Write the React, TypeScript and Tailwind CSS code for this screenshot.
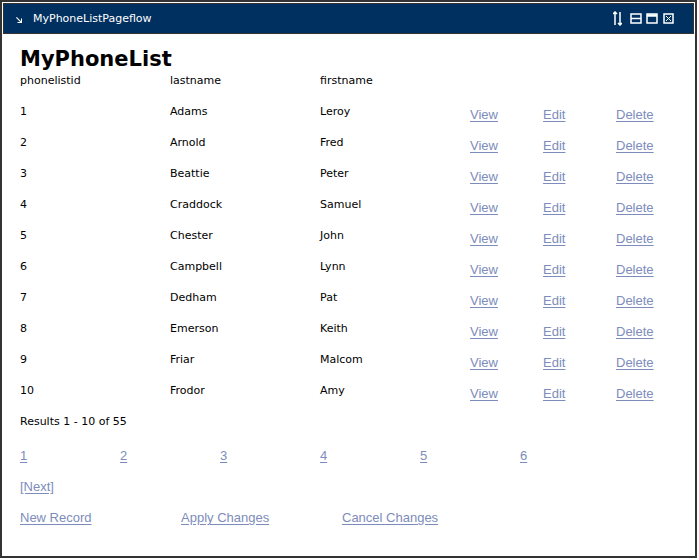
import React from "react"

const rows = [
  ["1", "Adams", "Leroy"],
  ["2", "Arnold", "Fred"],
  ["3", "Beattie", "Peter"],
  ["4", "Craddock", "Samuel"],
  ["5", "Chester", "John"],
  ["6", "Campbell", "Lynn"],
  ["7", "Dedham", "Pat"],
  ["8", "Emerson", "Keith"],
  ["9", "Friar", "Malcom"],
  ["10", "Frodor", "Amy"],
]

const linkCls = "text-[#7d8cbb] underline underline-offset-2 font-['Liberation_Sans',Arial,sans-serif] text-[13px]"

function TitleIcons() {
  return (
    <div className="flex items-center pr-[19px]">
      <svg width="9" height="15" viewBox="0 0 9 15" fill="none" stroke="white" strokeWidth="1.5">
        <path d="M2 14V1M0 3l2-2 2 2" />
        <path d="M7 1v13M5 12l2 2 2-2" />
      </svg>
      <svg width="12" height="11" viewBox="0 0 12 11" className="ml-[8px]" fill="none" stroke="white" strokeWidth="1.5">
        <rect x="1" y="1" width="10" height="9" />
        <path d="M1 5.5h10" />
      </svg>
      <svg width="12" height="11" viewBox="0 0 12 11" className="ml-[4px]" fill="none" stroke="white" strokeWidth="1.5">
        <rect x="1" y="1" width="10" height="9" />
        <path d="M1 2.5h10" strokeWidth="2.5" />
      </svg>
      <svg width="11" height="11" viewBox="0 0 11 11" className="ml-[5px]" fill="none" stroke="white" strokeWidth="1.5">
        <rect x="1" y="1" width="9" height="9" />
        <path d="M3 3l5 5M8 3l-5 5" strokeWidth="1" />
      </svg>
    </div>
  )
}

export default function App() {
  return (
    <div className="w-[699px] h-[560px] bg-white">
      <div className="w-[697px] h-[558px] border-2 border-[#333] flex flex-col font-['DejaVu_Sans',Verdana,sans-serif] text-[11px] text-black">
        <div className="p-px bg-white">
          <div className="h-[31px] border border-[#333] bg-[#00305f] flex items-center justify-between text-white">
            <div className="flex items-center pt-[2px]">
              <svg width="8" height="8" viewBox="0 0 8 8" className="ml-[11px] mr-[10px]" fill="white">
                <path d="M1 1.8L1.8 1 6 5.2V2.5h1V7H2.5V6h2.7z" />
              </svg>
              <span className="text-[11px]">MyPhoneListPageflow</span>
            </div>
            <TitleIcons />
          </div>
        </div>
        <div className="pl-[18px] pt-[9px]">
          <h1 className="text-[21px] font-bold leading-[30px]">MyPhoneList</h1>
          <div className="grid grid-cols-[150px_150px_150px_73px_73px_100px]">
            <div className="h-[29px] leading-[14px]">phonelistid</div>
            <div className="leading-[14px]">lastname</div>
            <div className="leading-[14px]">firstname</div>
            <div />
            <div />
            <div />
            {rows.map((r) => (
              <React.Fragment key={r[0]}>
                <div className="h-[31px] pt-[2px] leading-[14px]">{r[0]}</div>
                <div className="pt-[2px] leading-[14px]">{r[1]}</div>
                <div className="pt-[2px] leading-[14px]">{r[2]}</div>
                <div className="pt-[4px] leading-[16px]"><a className={linkCls}>View</a></div>
                <div className="pt-[4px] leading-[16px]"><a className={linkCls}>Edit</a></div>
                <div className="pt-[4px] leading-[16px]"><a className={linkCls}>Delete</a></div>
              </React.Fragment>
            ))}
          </div>
          <div className="pt-[2px] h-[35px] leading-[14px]">Results 1 - 10 of 55</div>
          <div className="flex h-[31px] leading-[16px]">
            {["1", "2", "3", "4", "5", "6"].map((p) => (
              <div key={p} className="w-[100px]"><a className={linkCls}>{p}</a></div>
            ))}
          </div>
          <div className="h-[31px] leading-[16px]"><a className={linkCls}>[Next]</a></div>
          <div className="flex leading-[16px]">
            <div className="w-[161px]"><a className={linkCls}>New Record</a></div>
            <div className="w-[161px]"><a className={linkCls}>Apply Changes</a></div>
            <div><a className={linkCls}>Cancel Changes</a></div>
          </div>
        </div>
      </div>
    </div>
  )
}
